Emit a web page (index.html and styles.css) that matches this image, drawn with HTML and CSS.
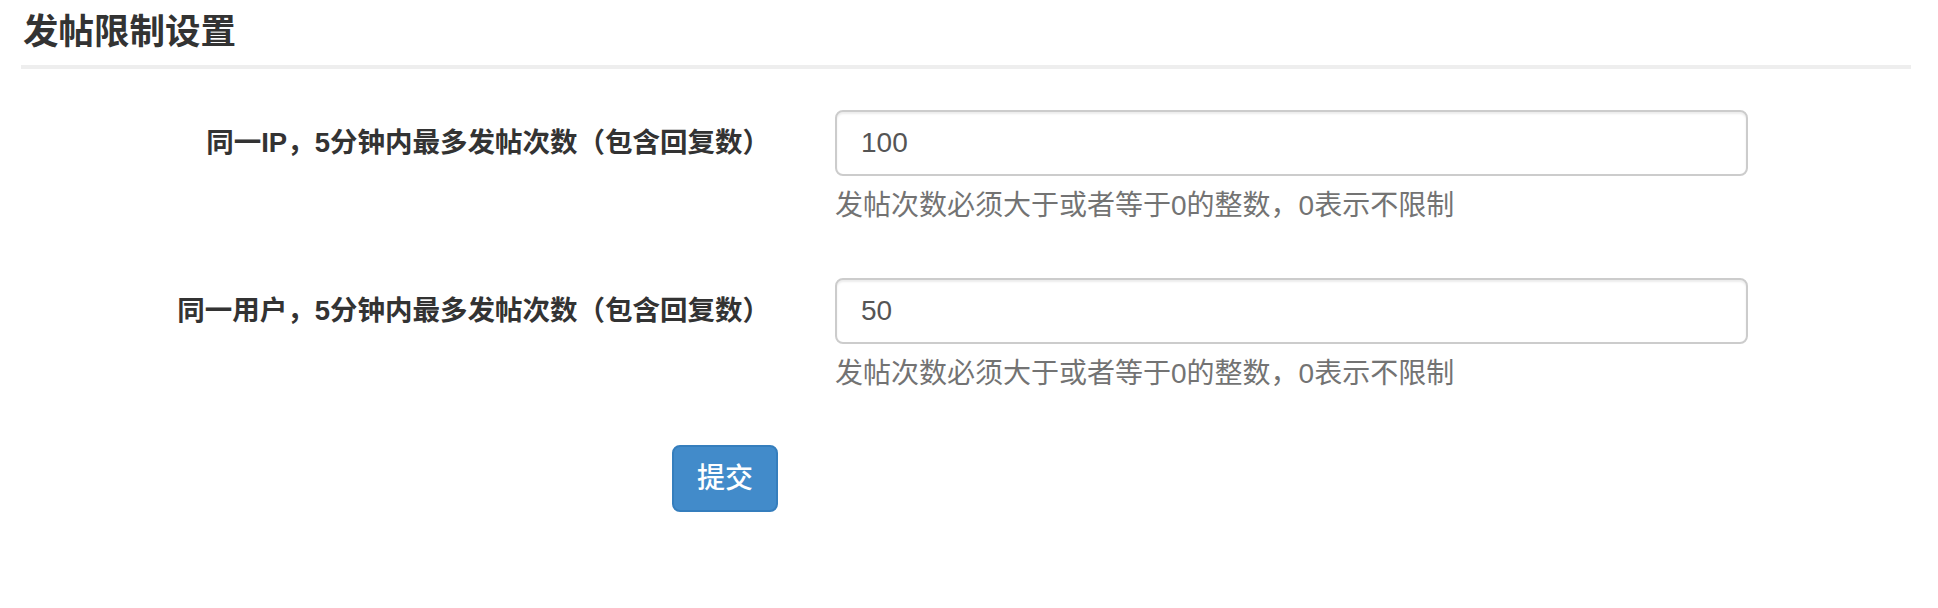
FILE: index.html
```html
<!DOCTYPE html>
<html lang="zh-CN">
<head>
<meta charset="utf-8">
<title>发帖限制设置</title>
<link rel="stylesheet" href="styles.css">
</head>
<body>
<div class="page">
  <div class="page-header">
    <h1 class="page-title">发帖限制设置</h1>
  </div>
  <form class="form">
    <div class="form-row">
      <label class="form-label" for="ip-limit">同一IP，5分钟内最多发帖次数（包含回复数）</label>
      <div class="form-field">
        <input class="form-input" id="ip-limit" type="text" value="100">
        <p class="form-help">发帖次数必须大于或者等于0的整数，0表示不限制</p>
      </div>
    </div>
    <div class="form-row">
      <label class="form-label" for="user-limit">同一用户，5分钟内最多发帖次数（包含回复数）</label>
      <div class="form-field">
        <input class="form-input" id="user-limit" type="text" value="50">
        <p class="form-help">发帖次数必须大于或者等于0的整数，0表示不限制</p>
      </div>
    </div>
    <div class="form-actions">
      <button class="btn-primary" type="button">提交</button>
    </div>
  </form>
</div>
</body>
</html>
```

FILE: styles.css
```css
html, body {
  margin: 0;
  padding: 0;
  background: #fff;
}

body {
  font-family: "Liberation Sans", "Noto Sans CJK SC", sans-serif;
  color: #333;
}

.page {
  padding: 0 27px 0 21px;
}

.page-header {
  border-bottom: 4px solid #eee;
}

.page-title {
  margin: 0;
  padding-left: 2px;
  font-size: 35.5px;
  font-weight: 700;
  line-height: 65px;
  color: #333;
}

.form {
  padding-top: 41px;
}

.form-row {
  display: grid;
  grid-template-columns: 749px 913px;
  column-gap: 65px;
  margin-bottom: 52px;
}

.form-label {
  text-align: right;
  font-size: 27.5px;
  font-weight: 700;
  line-height: 66px;
  color: #333;
}

.form-field {
  display: flex;
  flex-direction: column;
}

.form-input {
  box-sizing: border-box;
  height: 66px;
  width: 100%;
  padding: 0 24px;
  border: 2px solid #ccc;
  border-radius: 8px;
  box-shadow: inset 0 2px 2px rgba(0, 0, 0, 0.075);
  font-family: "Liberation Sans", "Noto Sans CJK SC", sans-serif;
  font-size: 28px;
  color: #555;
  background: #fff;
  outline: none;
}

.form-help {
  margin: 10px 0 0;
  font-size: 28px;
  line-height: 40px;
  color: #737373;
}

.form-actions {
  padding-left: 651px;
}

.btn-primary {
  box-sizing: border-box;
  width: 106px;
  height: 67px;
  margin-top: -1px;
  padding: 0;
  border: 2px solid #357ebd;
  border-radius: 8px;
  background: #428bca;
  color: #fff;
  font-family: "Liberation Sans", "Noto Sans CJK SC", sans-serif;
  font-size: 28px;
  font-weight: 500;
  line-height: 1;
}
```
